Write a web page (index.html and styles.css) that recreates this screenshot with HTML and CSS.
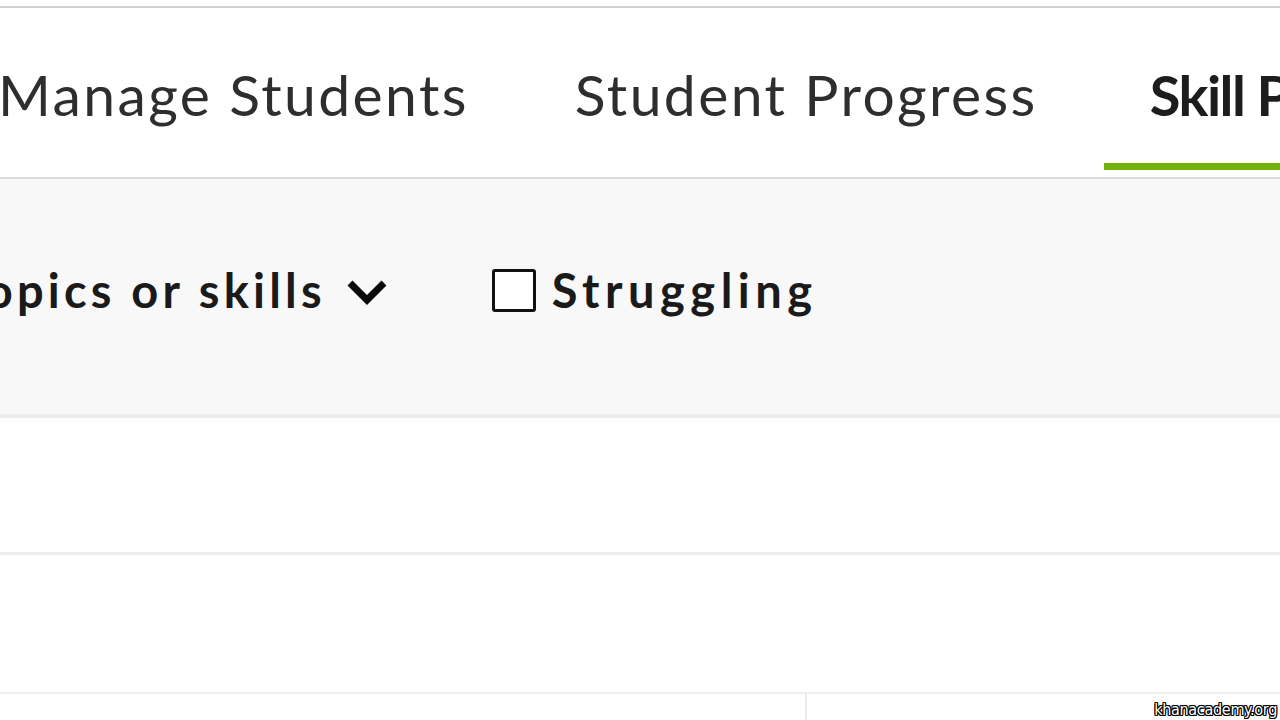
FILE: index.html
```html
<!DOCTYPE html>
<html>
<head>
<meta charset="utf-8">
<link rel="stylesheet" href="styles.css">
</head>
<body>
<div class="page">
  <div class="topgap"></div>
  <header class="tabs">
    <div class="tab">Manage Students</div>
    <div class="tab">Student Progress</div>
    <div class="tab active">Skill Progress</div>
  </header>
  <section class="filters">
    <div class="dropdown">
      <span>Topics or skills</span>
      <svg class="chev" viewBox="0 0 40 28" width="40" height="28"><path d="M3 5 L20 22 L37 5" fill="none" stroke="#0a0a0a" stroke-width="7" stroke-linejoin="miter"/></svg>
    </div>
    <label class="check">
      <span class="box"></span>
      <span class="label">Struggling</span>
    </label>
  </section>
  <div class="row row1"></div>
  <div class="row row2"></div>
  <div class="grid">
    <div class="cell left"></div>
    <div class="cell right"></div>
  </div>
</div>
<div class="watermark">khanacademy.org</div>
</body>
</html>
```
FILE: styles.css
```css
html, body {
  margin: 0;
  padding: 0;
  width: 1280px;
  height: 720px;
  overflow: hidden;
  background: #ffffff;
  font-family: Lato, "Open Sans", sans-serif;
}
.page {
  display: flex;
  flex-direction: column;
}
.topgap {
  height: 6px;
  border-bottom: 2px solid #d2d2d2;
}
.tabs {
  height: 169px;
  border-bottom: 2px solid #dcdcdc;
  display: flex;
  align-items: stretch;
  margin-left: -2px;
  white-space: nowrap;
}
.tab {
  font-size: 57px;
  color: #2e2e2e;
  font-weight: 400;
  letter-spacing: 2.4px;
  padding-top: 52px;
  box-sizing: border-box;
  margin-right: 106px;
}
.tab.active {
  font-weight: 700;
  font-size: 56px;
  color: #1d1d1d;
  margin-left: -40px;
  padding-left: 46px;
  padding-right: 46px;
  padding-top: 53px;
  border-bottom: 7px solid #71b30a;
  margin-bottom: 7px;
  letter-spacing: -1.5px;
}
.filters {
  height: 239px;
  background: #f8f8f8;
  border-bottom: 4px solid #ececec;
  display: flex;
  align-items: center;
  padding-bottom: 14px;
  box-sizing: border-box;
  margin-left: -41px;
  white-space: nowrap;
}
.dropdown {
  display: flex;
  align-items: center;
  font-size: 47px;
  font-weight: 700;
  color: #1a1a1a;
  letter-spacing: 4.2px;
}
.chev {
  margin-left: 21px;
  margin-top: 4px;
}
.check {
  display: flex;
  align-items: center;
  margin-left: 105px;
}
.box {
  width: 38px;
  height: 37px;
  border: 3px solid #111;
  border-radius: 3px;
  background: #fff;
  margin-top: 2px;
}
.label {
  margin-left: 16px;
  font-size: 47px;
  font-weight: 700;
  color: #1a1a1a;
  letter-spacing: 5.5px;
}
.row1 {
  height: 134px;
  border-bottom: 3px solid #ededed;
}
.row2 {
  height: 137px;
  border-bottom: 2px solid #f0f0f0;
}
.grid {
  display: flex;
  height: 40px;
}
.cell.left {
  width: 805px;
  border-right: 2px solid #ececec;
}
.cell.right {
  flex: 1;
}
.watermark {
  position: absolute;
  right: 3px;
  bottom: 1px;
  font-family: "DejaVu Sans Condensed", "Liberation Sans Narrow", sans-serif;
  font-size: 16px;
  color: #ffffff;
  letter-spacing: -0.3px;
  text-shadow: 1px 0 0 #000, -1px 0 0 #000, 0 1px 0 #000, 0 -1px 0 #000, 1px 1px 0 #000, -1px -1px 0 #000, 1px -1px 0 #000, -1px 1px 0 #000;
}
```
